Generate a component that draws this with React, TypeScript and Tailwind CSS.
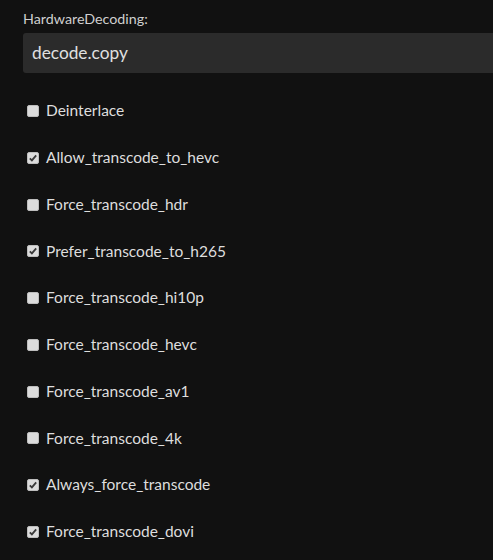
import React from "react";

const items: [string, boolean][] = [
  ["Deinterlace", false],
  ["Allow_transcode_to_hevc", true],
  ["Force_transcode_hdr", false],
  ["Prefer_transcode_to_h265", true],
  ["Force_transcode_hi10p", false],
  ["Force_transcode_hevc", false],
  ["Force_transcode_av1", false],
  ["Force_transcode_4k", false],
  ["Always_force_transcode", true],
  ["Force_transcode_dovi", true],
];

function Box({ checked }: { checked: boolean }) {
  return (
    <span className="w-[12px] h-[12px] rounded-[2px] bg-[#dcdcdc] border border-[#bdbdbd] flex items-center justify-center shrink-0">
      {checked && (
        <svg width="10" height="10" viewBox="0 0 11 11">
          <path d="M2 5.8 L4.3 8.2 L9 2.6" fill="none" stroke="#3a3a3a" strokeWidth="2" />
        </svg>
      )}
    </span>
  );
}

export default function App() {
  return (
    <div
      className="w-[493px] h-[560px] bg-[#111111] overflow-hidden pl-[23px] pt-[9px]"
      style={{ fontFamily: "Lato, 'Open Sans', sans-serif" }}
    >
      <div className="text-[14.3px] leading-[20px] text-[#cfcfcf]">HardwareDecoding:</div>
      <div className="mt-[4px] h-[40px] bg-[#2b2b2b] rounded-l-[3px] flex items-center pl-[9px] text-[17.3px] text-[#e0e0e0]">
        decode.copy
      </div>
      <div className="mt-[14.6px] flex flex-col">
        {items.map(([label, checked]) => (
          <div key={label} className="h-[46.78px] flex items-center pl-[4px] gap-[7px]">
            <Box checked={checked} />
            <span className="text-[15.5px] text-[#dedede]">{label}</span>
          </div>
        ))}
      </div>
    </div>
  );
}
